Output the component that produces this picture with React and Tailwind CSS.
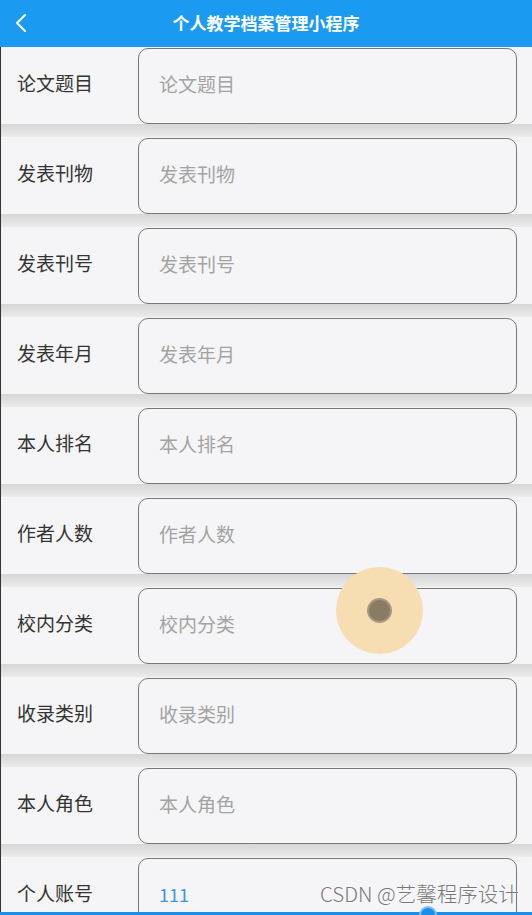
import React from 'react';

const FIELDS = [
  { label: '论文题目' },
  { label: '发表刊物' },
  { label: '发表刊号' },
  { label: '发表年月' },
  { label: '本人排名' },
  { label: '作者人数' },
  { label: '校内分类' },
  { label: '收录类别' },
  { label: '本人角色' },
  { label: '个人账号', value: '111' },
];

export default function App() {
  return (
    <div
      className="relative w-[532px] h-[915px] overflow-hidden bg-[#f5f5f7]"
      style={{ fontFamily: '"Noto Sans CJK SC", "Noto Sans", sans-serif' }}
    >
      {/* 顶部导航 */}
      <div className="h-[47px] bg-[#1a9af1] flex items-center relative">
        <svg className="absolute left-[13px] top-[12px]" width="16" height="22" viewBox="0 0 16 22">
          <path d="M12 3 L4 11 L12 19" fill="none" stroke="#fff" strokeWidth="2" strokeLinecap="round" strokeLinejoin="round" />
        </svg>
        <div className="flex-1 text-center text-white font-bold text-[17px] pb-[2px]">个人教学档案管理小程序</div>
      </div>

      <div className="border-l border-[#333]">
        {FIELDS.map((f, i) => (
          <div key={i}>
            <div className="h-[77px] flex items-center">
              <div className="w-[137px] pl-[16px] pb-[4px] text-[19px] text-[#333]">{f.label}</div>
              <div className="flex-1 mr-[15px] h-[76px] mt-[1px] border-[1.5px] border-[#787878] rounded-[10px] flex items-center pl-[20px] pb-[4px]">
                {f.value ? (
                  <span className="text-[18px] text-[#3798e3]">{f.value}</span>
                ) : (
                  <span className="text-[19px] text-[#a3a3a3]">{f.label}</span>
                )}
              </div>
            </div>
            <div className="h-[13px] bg-linear-to-b from-[#d6d6d6] to-[#ebebeb]" />
          </div>
        ))}
      </div>

      {/* 触摸指示 */}
      <div className="absolute left-[336px] top-[567px] w-[87px] h-[87px] rounded-full bg-[#f7deb2] flex items-center justify-center">
        <div className="w-[25px] h-[25px] rounded-full bg-[#8a7b65] border-[2px] border-[#a8987f]" />
      </div>

      {/* 水印 */}
      <div className="absolute left-[320px] top-[878px] text-[20.5px] font-light text-[#777]" style={{ textShadow: '0 0 2px #fff' }}>
        CSDN @艺馨程序设计
      </div>

      {/* 底部进度条 */}
      <div className="absolute left-0 right-0 bottom-0 h-[3px] bg-[#1a8ee8]" />
      <div className="absolute left-[419px] top-[906px] w-[18px] h-[18px] rounded-full bg-[#1a8ee8] border-[2px] border-[#7fc0f5]" />
    </div>
  );
}
